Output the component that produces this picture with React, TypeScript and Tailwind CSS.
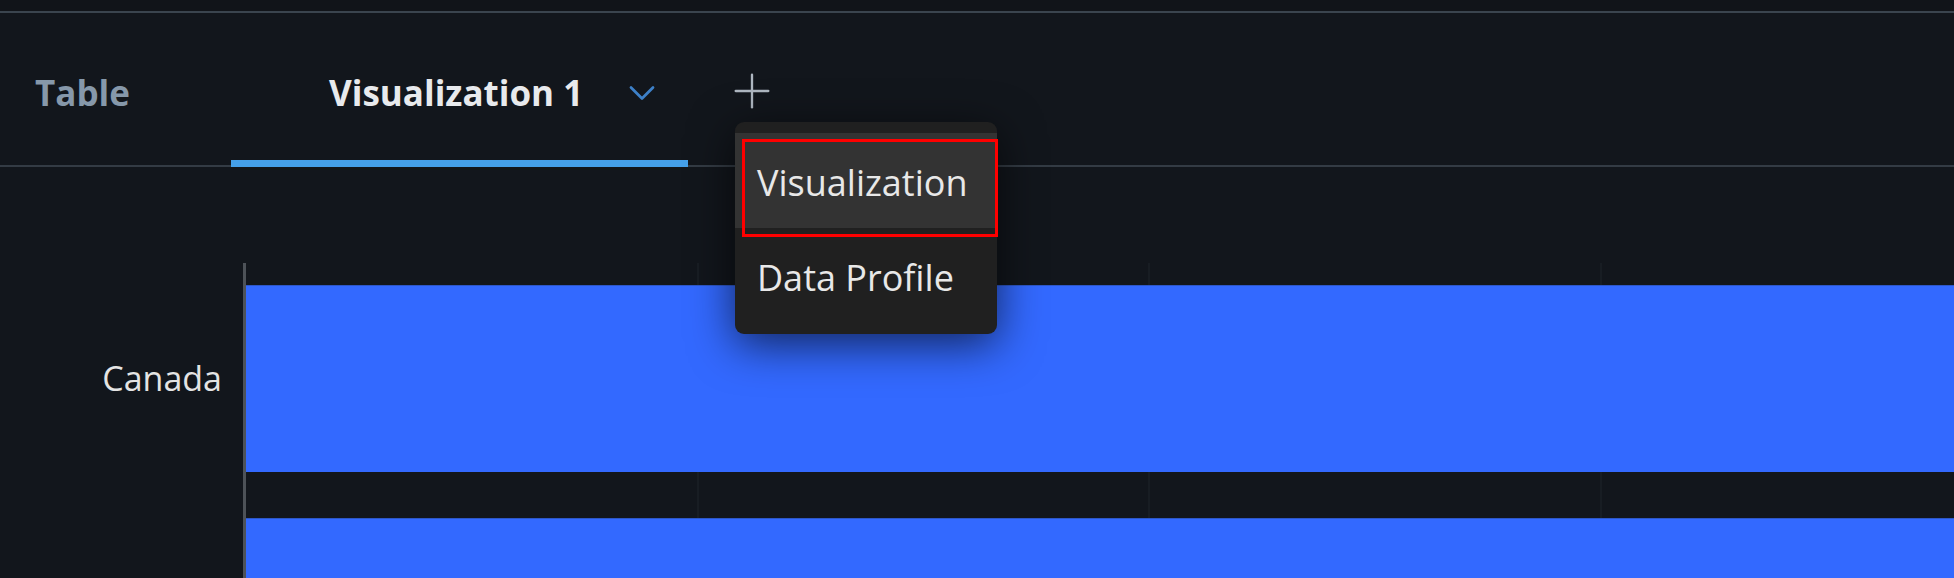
import { ChevronDown, Plus } from "lucide-react";

const gridLines = [451, 902, 1354];

export default function App() {
  return (
    <div className="relative h-[578px] w-[1954px] overflow-hidden bg-[#12161c] font-['Open_Sans',sans-serif]">
      {/* top rule */}
      <div className="h-[11px] bg-[#111419]" />
      <div className="h-[2px] bg-[#3a444e]" />

      {/* tabs */}
      <div className="flex h-[154px] items-stretch border-b-2 border-[#333b44]">
        <div className="flex w-[231px] items-center pt-[8px] pl-[35px] text-[35px] font-bold text-[#8698aa]">
          Table
        </div>
        <div className="relative flex w-[457px] items-center pt-[8px] pl-[98px] text-[35px] font-bold text-[#e8eaed]">
          <span>Visualization 1</span>
          <ChevronDown className="ml-[37px] h-[44px] w-[44px] text-[#3d80c8]" strokeWidth={1.5} />
          <div className="absolute right-0 bottom-[-2px] left-0 h-[7px] bg-[#45a0ea]" />
        </div>
        <div className="flex items-center pl-[36px] pt-[4px]">
          <Plus className="h-[56px] w-[56px] text-[#aeb7c1]" strokeWidth={1} />
        </div>
      </div>

      {/* chart */}
      <div className="flex">
        <div className="w-[243px] pt-[118px]">
          <div className="flex h-[187px] items-center justify-end pr-[21px] text-[34px] text-[#e4e4e4]">
            Canada
          </div>
        </div>
        <div className="mt-[96px] h-[400px] w-[3px] bg-[#4d5258]" />
        <div className="relative flex-1 pt-[118px]">
          {gridLines.map((x) => (
            <div
              key={x}
              className="absolute top-[96px] bottom-0 w-[2px] bg-[#181d23]"
              style={{ left: x }}
            />
          ))}
          <div className="relative h-[187px] border-t border-[#2d57c8] bg-[#3369ff]" />
          <div className="relative mt-[46px] h-[187px] border-t border-[#2d57c8] bg-[#3369ff]" />
        </div>
      </div>

      {/* add menu */}
      <div className="absolute top-[122px] left-[735px] w-[262px] rounded-[9px] bg-[#202020] py-[11px] shadow-[0_10px_45px_rgba(0,0,0,0.65)]">
        <div className="flex h-[95px] items-center bg-[#333333] px-[22px] pt-[4px] text-[36px] text-[#e8e8e8]">
          Visualization
        </div>
        <div className="flex h-[95px] items-center px-[22px] pt-[4px] text-[36px] text-[#e8e8e8]">
          Data Profile
        </div>
        <div className="pointer-events-none absolute top-[17px] left-[7px] h-[98px] w-[256px] border-[3px] border-[#ff0000]" />
      </div>
    </div>
  );
}
